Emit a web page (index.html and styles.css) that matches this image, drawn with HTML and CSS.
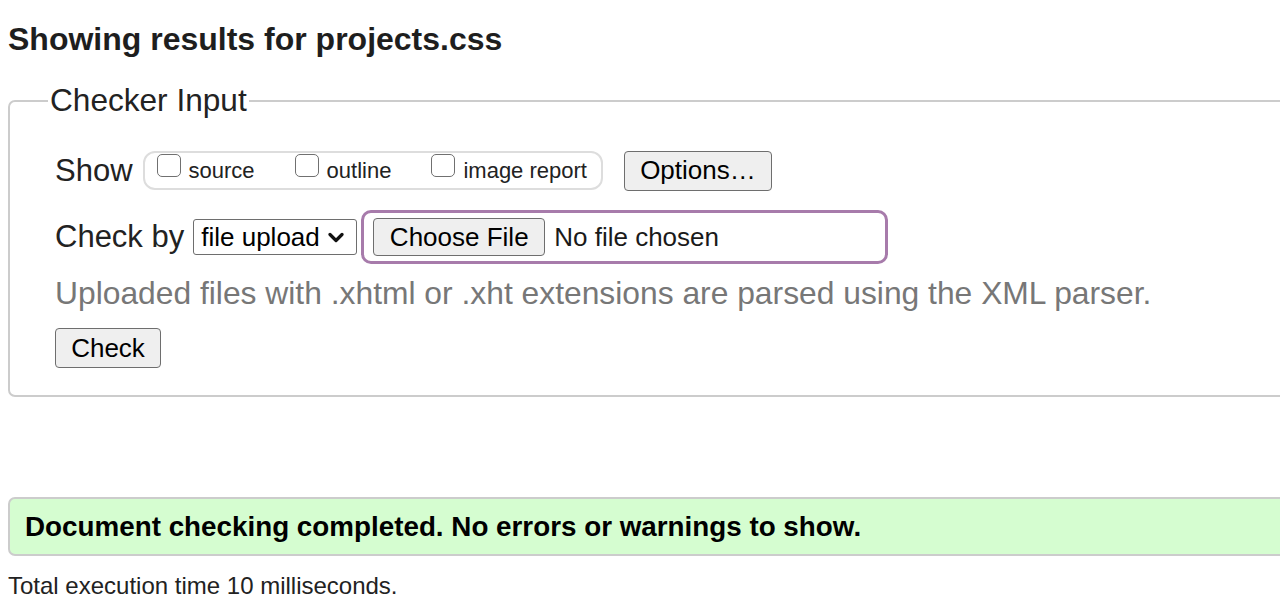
FILE: index.html
```html
<!DOCTYPE html>
<html lang="en">
<head>
<meta charset="utf-8">
<title>Showing results for projects.css - Nu Html Checker</title>
<link rel="stylesheet" href="styles.css">
</head>
<body>
<h2 class="title">Showing results for projects.css</h2>
<fieldset class="checker">
  <legend class="legend">Checker Input</legend>
  <div class="row show-row">
    <span class="lbl">Show</span>
    <div class="opts">
      <label class="opt"><span class="cb"></span><span class="opt-text">source</span></label>
      <label class="opt"><span class="cb"></span><span class="opt-text">outline</span></label>
      <label class="opt"><span class="cb"></span><span class="opt-text">image report</span></label>
    </div>
    <span class="btn options">Options…</span>
  </div>
  <div class="row by-row">
    <span class="lbl">Check by</span>
    <span class="select"><span class="select-text">file upload</span><svg class="chev" width="16" height="11" viewBox="0 0 16 11"><path d="M2 2.5 L8 8.5 L14 2.5" fill="none" stroke="#111" stroke-width="3.2" stroke-linecap="round" stroke-linejoin="round"/></svg></span>
    <div class="file">
      <span class="btn choose">Choose File</span>
      <span class="nofile">No file chosen</span>
    </div>
  </div>
  <p class="note">Uploaded files with .xhtml or .xht extensions are parsed using the XML parser.</p>
  <span class="btn check">Check</span>
</fieldset>
<div class="status">
  <p class="status-text">Document checking completed. No errors or warnings to show.</p>
</div>
<p class="time">Total execution time 10 milliseconds.</p>
</body>
</html>
```

FILE: styles.css
```css
html {
  overflow: hidden;
  background: #fff;
}
body {
  margin: 8px;
  font-family: "Liberation Sans", Arial, Helvetica, sans-serif;
  color: #222;
}
.title {
  margin: 13px 0 0;
  font-size: 32px;
  line-height: 37px;
  font-weight: bold;
  color: #1e1e1e;
}
.checker {
  margin: 24px 0 0;
  width: calc(100% + 80px);
  box-sizing: border-box;
  border: 2px solid #ccc;
  border-radius: 7px;
  padding: 31px 20px 27px 45px;
}
.legend {
  margin-left: -7px;
  padding: 0 2px;
  font-size: 31.6px;
  line-height: 37px;
  color: #222;
}
.row {
  display: flex;
  align-items: center;
}
.show-row {
  height: 41px;
}
.lbl {
  font-size: 31px;
  line-height: 36px;
  color: #222;
}
.opts {
  margin-left: 10px;
  display: flex;
  align-items: center;
  height: 39px;
  box-sizing: border-box;
  border: 2px solid #ddd;
  border-radius: 12px;
  padding: 0 14px 0 12px;
  gap: 40px;
}
.opt {
  display: flex;
  align-items: center;
  font-size: 22px;
  line-height: 25px;
  color: #222;
}
.cb {
  width: 24px;
  height: 23px;
  box-sizing: border-box;
  border: 1.5px solid #707070;
  border-radius: 5px;
  background: #fff;
  margin-right: 8px;
  margin-bottom: 11px;
}
.btn {
  display: inline-flex;
  align-items: center;
  justify-content: center;
  box-sizing: border-box;
  background: #efefef;
  border: 1px solid #6e6e6e;
  border-radius: 4px;
  font-size: 26px;
  color: #000;
}
.options {
  margin-left: 21px;
  width: 148px;
  height: 40px;
}
.by-row {
  margin-top: 19px;
  height: 54px;
}
.select {
  margin-left: 9px;
  width: 164px;
  height: 36px;
  box-sizing: border-box;
  border: 1px solid #6e6e6e;
  border-radius: 3px;
  background: #fff;
  display: flex;
  align-items: center;
  padding: 0 6px 0 7px;
  gap: 8px;
}
.select-text {
  font-size: 26px;
  color: #000;
}
.chev {
  flex: none;
}
.file {
  margin-left: 4px;
  width: 527px;
  height: 54px;
  box-sizing: border-box;
  border: 3px solid #a77bab;
  border-radius: 10px;
  display: flex;
  align-items: center;
  padding-left: 9px;
}
.choose {
  width: 172px;
  height: 38px;
}
.nofile {
  margin-left: 9px;
  font-size: 26px;
  color: #1a1a1a;
}
.note {
  margin: 12px 0 0;
  font-size: 31.8px;
  line-height: 34px;
  color: #777;
}
.check {
  margin-top: 18px;
  width: 106px;
  height: 40px;
}
.status {
  margin-top: 100px;
  width: calc(100% + 80px);
  box-sizing: border-box;
  height: 59px;
  background: #d5fdd0;
  border: 2px solid #ccc;
  border-radius: 7px;
  display: flex;
  align-items: center;
  padding-left: 15px;
}
.status-text {
  margin: 0;
  font-size: 27.8px;
  font-weight: bold;
  color: #000;
}
.time {
  margin: 16px 0 0;
  font-size: 24px;
  line-height: 28px;
  color: #222;
}
```
